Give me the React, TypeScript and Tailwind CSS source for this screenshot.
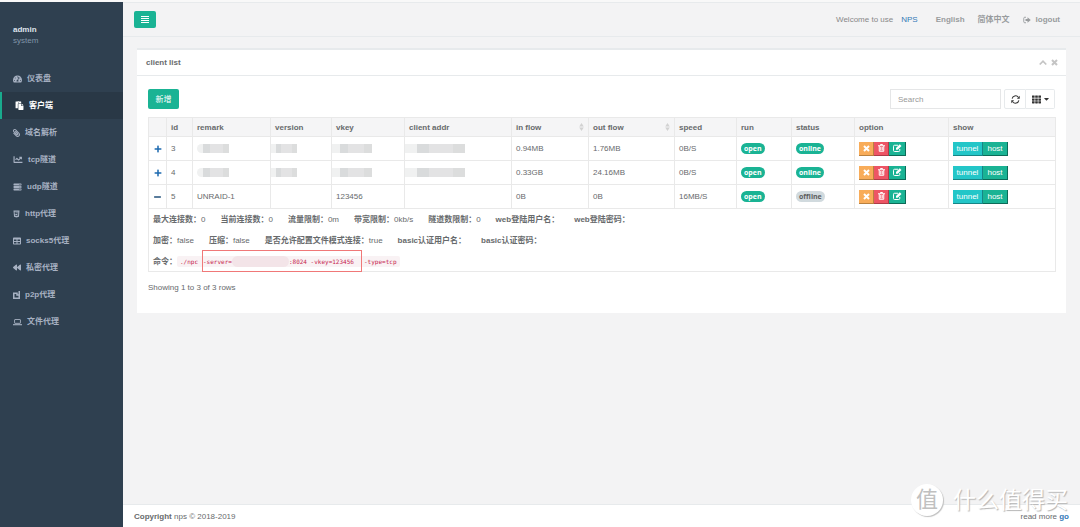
import type { ReactNode } from "react";
import {
  FaTachometerAlt,
  FaPaste,
  FaPaperclip,
  FaChartLine,
  FaServer,
  FaHtml5,
  FaTable,
  FaBackward,
  FaPlus,
  FaMinus,
  FaTh,
  FaCaretDown,
} from "react-icons/fa";

interface NavItem {
  label: string;
  icon: ReactNode;
  active?: boolean;
}

interface Client {
  id: number;
  remark: string;
  vkey: string;
  inFlow: string;
  outFlow: string;
  speed: string;
  online: boolean;
  hidden?: boolean;
}

const BarsIcon = () => (
  <svg viewBox="0 0 8 7" className="h-[7px] w-2" fill="none" stroke="currentColor">
    <path d="M0 .5h8M0 2.500h8M0 4.500h8M0 6.500h8" strokeWidth="1" />
  </svg>
);

const LaptopIcon = () => (
  <svg viewBox="0 0 20 16" className="h-2 w-[9px]" fill="none" stroke="currentColor">
    <rect x="3.5" y="2.5" width="13" height="8.5" rx="1" strokeWidth="2" />
    <path d="M0 14h20" strokeWidth="2.5" />
  </svg>
);

const BoxIcon = () => (
  <svg viewBox="0 0 14 16" className="h-2 w-[7px]" fill="none" stroke="currentColor">
    <path d="M12.5 0v14.5h-11v-10H8V8h4" strokeWidth="3" />
  </svg>
);

const TimesIcon = () => (
  <svg viewBox="0 0 14 14" className="h-[7px] w-[7px]" fill="none" stroke="currentColor">
    <path d="M2 2l10 10M12 2L2 12" strokeWidth="4" />
  </svg>
);

const ChevronUpIcon = () => (
  <svg viewBox="0 0 16 14" className="h-[7px] w-2" fill="none" stroke="currentColor">
    <path d="M1.500 11L8 4.500l6.500 6.500" strokeWidth="3.500" />
  </svg>
);

const RefreshIcon = () => (
  <svg viewBox="0 0 16 16" className="h-[9px] w-[9px]" fill="none" stroke="currentColor">
    <path d="M2 6.500A6.200 6.200 0 0 1 13 4M14 9.500A6.200 6.200 0 0 1 3 12" strokeWidth="1.800" />
    <path d="M15.500 1.500v5h-5zM.5 14.500v-5h5z" fill="currentColor" stroke="none" />
  </svg>
);

const TrashIcon = () => (
  <svg viewBox="0 0 14 16" className="h-2 w-[7px]" fill="none" stroke="currentColor">
    <path d="M0 3.500h14M5 3V1h4v2M2.500 4v10.500h9V4M5.500 6v7M8.500 6v7" strokeWidth="2" />
  </svg>
);

const EditIcon = () => (
  <svg viewBox="0 0 18 16" className="h-2 w-[9px]" fill="none" stroke="currentColor">
    <path d="M10 2.500H3a2 2 0 0 0-2 2V13a2 2 0 0 0 2 2h8.500a2 2 0 0 0 2-2v-3" strokeWidth="2" />
    <path d="M6 11.500V8l7.500-7.500L17 4l-7.500 7.500z" fill="currentColor" stroke="none" />
  </svg>
);

const SignOutIcon = () => (
  <svg viewBox="0 0 16 16" className="h-2 w-2" fill="none" stroke="currentColor">
    <path d="M6 2.500H3.500a2 2 0 0 0-2 2v7a2 2 0 0 0 2 2H6" strokeWidth="1.800" />
    <path d="M5 6h4V2.500L15.500 8 9 13.500V10H5z" fill="currentColor" stroke="none" />
  </svg>
);

const navItems: NavItem[] = [
  { label: "仪表盘", icon: <FaTachometerAlt className="h-2 w-[9px]" /> },
  { label: "客户端", icon: <FaPaste className="h-[9px] w-[9px]" />, active: true },
  { label: "域名解析", icon: <FaPaperclip className="h-2 w-[7px] -scale-x-100" /> },
  { label: "tcp隧道", icon: <FaChartLine className="h-[9px] w-[10px]" /> },
  { label: "udp隧道", icon: <FaServer className="h-2 w-[9px]" /> },
  { label: "http代理", icon: <FaHtml5 className="h-2 w-[7px]" /> },
  { label: "socks5代理", icon: <FaTable className="h-2 w-[8px]" /> },
  { label: "私密代理", icon: <FaBackward className="h-[9px] w-[8px]" /> },
  { label: "p2p代理", icon: <BoxIcon /> },
  { label: "文件代理", icon: <LaptopIcon /> },
];

const columns = [
  { label: "", width: "w-[18px]" },
  { label: "id", width: "w-[26px]" },
  { label: "remark", width: "w-[78px]" },
  { label: "version", width: "w-[61px]" },
  { label: "vkey", width: "w-[73px]" },
  { label: "client addr", width: "w-[107px]" },
  { label: "in flow", width: "w-[77px]", sortable: true },
  { label: "out flow", width: "w-[86px]", sortable: true },
  { label: "speed", width: "w-[62px]" },
  { label: "run", width: "w-[55px]" },
  { label: "status", width: "w-[63px]" },
  { label: "option", width: "w-[94px]" },
  { label: "show", width: "w-[107px]" },
];

const clients: Client[] = [
  { id: 3, remark: "", vkey: "", inFlow: "0.94MB", outFlow: "1.76MB", speed: "0B/S", online: true, hidden: true },
  { id: 4, remark: "", vkey: "", inFlow: "0.33GB", outFlow: "24.16MB", speed: "0B/S", online: true, hidden: true },
  { id: 5, remark: "UNRAID-1", vkey: "123456", inFlow: "0B", outFlow: "0B", speed: "16MB/S", online: false },
];

const details = [
  [
    ["最大连接数", "0"],
    ["当前连接数", "0"],
    ["流量限制", "0m"],
    ["带宽限制", "0kb/s"],
    ["隧道数限制", "0"],
    ["web登陆用户名", ""],
    ["web登陆密码", ""],
  ],
  [
    ["加密", "false"],
    ["压缩", "false"],
    ["是否允许配置文件模式连接", "true"],
    ["basic认证用户名", ""],
    ["basic认证密码", ""],
  ],
];

const cell = "border border-[#e9e9e9] px-1";

function Masked({ className }: { className: string }) {
  return (
    <div className={`flex h-[9px] ${className}`}>
      <span className="flex-1 bg-[#f0f1f1]" />
      <span className="flex-1 bg-[#d9dbdc]" />
      <span className="flex-2 bg-[#e3e3e4]" />
      <span className="flex-1 bg-[#dcdddd]" />
    </div>
  );
}

function Badge({ on, children }: { on: boolean; children: ReactNode }) {
  return (
    <span
      className={`block h-[11px] w-fit rounded-full px-[3px] font-['Open_Sans'] text-[7px] leading-[11px] font-bold ${
        on ? "bg-[#1ab394] text-white" : "bg-[#d1dade] text-[#5e5e5e]"
      }`}
    >
      {children}
    </span>
  );
}

function ActionButton({ className, label, children }: { className: string; label?: string; children: ReactNode }) {
  return (
    <button
      type="button"
      aria-label={label}
      className={`flex h-[14px] items-center justify-center border-r border-b text-[8px] text-white ${className}`}
    >
      {children}
    </button>
  );
}

function Sidebar() {
  return (
    <aside className="w-[123px] shrink-0 bg-[#2f4050] text-[#a7b1c2]">
      <div className="h-[63px] px-[13px] pt-[22px] leading-[11px]">
        <p className="font-bold text-[#dfe4ed]">admin</p>
        <p className="text-[#8095a8]">system</p>
      </div>
      <nav>
        {navItems.map((item) => (
          <a
            key={item.label}
            href="#"
            className={`flex h-[27px] items-center gap-[5px] pl-[13px] font-bold ${
              item.active ? "border-l-2 border-[#19aa8d] bg-[#293846] text-white" : ""
            }`}
          >
            {item.icon}
            {item.label}
          </a>
        ))}
      </nav>
    </aside>
  );
}

function Topbar() {
  return (
    <header className="flex h-[35px] items-center justify-between border-t border-b border-[#e7eaec] pr-5 pl-[11px] text-[#999c9e]">
      <button
        type="button"
        aria-label="Toggle menu"
        className="flex h-[17px] w-[22px] items-center justify-center rounded-xs bg-[#1ab394] text-white"
      >
        <BarsIcon />
      </button>
      <div className="flex items-center font-bold">
        <span className="font-normal text-[#888888]">Welcome to use</span>
        <a href="#" className="ml-2 font-normal text-[#337ab7]">NPS</a>
        <a href="#" className="ml-[18px]">English</a>
        <a href="#" className="ml-[13px]">简体中文</a>
        <a href="#" className="ml-[13px] flex items-center gap-[5px]">
          <SignOutIcon />
          logout
        </a>
      </div>
    </header>
  );
}

function ClientTable() {
  return (
    <table className="w-full table-fixed border-collapse">
      <thead>
        <tr className="h-[19px] bg-[#f5f5f6] text-left">
          {columns.map((col) => (
            <th key={col.label} className={`${cell} ${col.width}`}>
              <div className="flex items-center justify-between">
                {col.label}
                {col.sortable && (
                  <svg viewBox="0 0 8 14" className="h-2 w-[5px] fill-[#d2d2d2]">
                    <path d="M0 6l4-6 4 6zM0 8h8l-4 6z" />
                  </svg>
                )}
              </div>
            </th>
          ))}
        </tr>
      </thead>
      <tbody>
        {clients.map((client) => (
          <tr key={client.id} className="h-6">
            <td className={cell}>
              <a href="#" aria-label="Toggle details" className="flex justify-center text-[#1c6ab0]">
                {client.hidden ? <FaPlus className="h-2 w-2" /> : <FaMinus className="h-2 w-[7px] text-[#23527c]" />}
              </a>
            </td>
            <td className={cell}>{client.id}</td>
            <td className={cell}>{client.hidden ? <Masked className="w-8 overflow-hidden rounded-l-full" /> : client.remark}</td>
            <td className={cell}>{client.hidden && <Masked className="-ml-1 w-[26px]" />}</td>
            <td className={cell}>{client.hidden ? <Masked className="-ml-1 w-10" /> : client.vkey}</td>
            <td className={cell}>{client.hidden && <Masked className="-ml-1 w-[60px]" />}</td>
            <td className={cell}>{client.inFlow}</td>
            <td className={cell}>{client.outFlow}</td>
            <td className={cell}>{client.speed}</td>
            <td className={cell}>
              <Badge on>open</Badge>
            </td>
            <td className={cell}>
              <Badge on={client.online}>{client.online ? "online" : "offline"}</Badge>
            </td>
            <td className={cell}>
              <div className="flex">
                <ActionButton label="Stop" className="w-[15px] border-[#b9813f] bg-[#f8ac59]">
                  <TimesIcon />
                </ActionButton>
                <ActionButton label="Delete" className="w-[15px] border-[#ae3c48] bg-[#ed5565]">
                  <TrashIcon />
                </ActionButton>
                <ActionButton label="Edit" className="w-[17px] border-[#0d6b58] bg-[#1ab394]">
                  <EditIcon />
                </ActionButton>
              </div>
            </td>
            <td className={cell}>
              <div className="flex">
                <ActionButton className="w-[30px] border-[#178586] bg-[#23c6c8]">tunnel</ActionButton>
                <ActionButton className="w-[25px] border-[#0d6b58] bg-[#1ab394]">host</ActionButton>
              </div>
            </td>
          </tr>
        ))}
        <tr>
          <td colSpan={13} className={cell}>
            {details.map((line) => (
              <div key={line[0][0]} className="flex h-[21px] items-center gap-[15px]">
                {line.map(([name, value]) => (
                  <span key={name}>
                    <b>{name}：</b>
                    {value}
                  </span>
                ))}
              </div>
            ))}
            <div className="flex h-5 items-center">
              <b>命令：</b>
              <code className="flex h-[11px] items-center rounded-xs bg-[#f9f2f4] px-[3px] font-['DejaVu_Sans_Mono','Liberation_Mono',monospace] text-[6px] text-[#c7254e]">
                <span className="w-[22px]">./npc</span>
                <span className="flex h-[22px] w-40 shrink-0 items-center border border-[#f07878]">
                  -server=
                  <span className="h-[11px] w-[57px] rounded-full bg-[#f3e4e8]" />
                  :8024 -vkey=123456
                </span>
                <span className="pl-[2px]">-type=tcp</span>
              </code>
            </div>
          </td>
        </tr>
      </tbody>
    </table>
  );
}

export default function App() {
  return (
    <div className="relative flex min-h-screen border-t-2 border-[#f8f8f8] bg-[#f3f3f4] font-['Liberation_Sans','Noto_Sans_CJK_SC',sans-serif] text-[8px] leading-[11px] text-[#676a6c]">
      <Sidebar />
      <div className="flex min-w-0 flex-1 flex-col">
        <Topbar />
        <main className="flex-1 px-[14px] pt-[11px]">
          <section className="border-t-2 border-[#e7eaec] bg-white">
            <div className="flex h-[26px] items-center justify-between border-b border-[#e7eaec] pr-2 pl-[9px]">
              <h5 className="font-bold">client list</h5>
              <div className="flex gap-1 text-[#c4c4c4]">
                <button type="button" aria-label="Collapse"><ChevronUpIcon /></button>
                <button type="button" aria-label="Close"><TimesIcon /></button>
              </div>
            </div>
            <div className="px-[11px] pt-[13px] pb-5">
              <div className="mb-2 flex items-center justify-between">
                <button type="button" className="h-5 w-[31px] rounded-xs bg-[#1ab394] text-white">新增</button>
                <div className="flex">
                  <input
                    type="text"
                    aria-label="Search"
                    placeholder="Search"
                    className="mr-[3px] h-5 w-[111px] border border-[#e5e6e7] px-[7px] placeholder:text-[#999999]"
                  />
                  <button type="button" aria-label="Refresh" className="flex h-5 w-[22px] items-center justify-center rounded-l-xs border border-[#e7eaec] text-[#333333]">
                    <RefreshIcon />
                  </button>
                  <button type="button" aria-label="Columns" className="flex h-5 w-[29px] items-center justify-center gap-[3px] rounded-r-xs border border-l-0 border-[#e7eaec] text-[#333333]">
                    <FaTh className="h-[9px] w-[9px]" />
                    <FaCaretDown className="h-2 w-[5px]" />
                  </button>
                </div>
              </div>
              <ClientTable />
              <p className="mt-[10px]">Showing 1 to 3 of 3 rows</p>
            </div>
          </section>
        </main>
        <footer className="flex h-[23px] items-center justify-between border-t border-[#e7eaec] bg-white px-[11px]">
          <p><b>Copyright</b> nps © 2018-2019</p>
          <p>read more <a href="#" className="font-bold text-[#337ab7]">go</a></p>
        </footer>
      </div>
      <div className="pointer-events-none absolute right-3 bottom-[11px] flex items-center gap-[10px] text-[23px] leading-8 text-white [text-shadow:1px_1px_1px_#b5b5b5]">
        <span className="flex h-8 w-8 items-center justify-center rounded-full bg-white text-[22px] text-[#c0c0c0] shadow-[1px_1px_1px_#c0c0c0] [text-shadow:none]">值</span>
        什么值得买
      </div>
    </div>
  );
}
